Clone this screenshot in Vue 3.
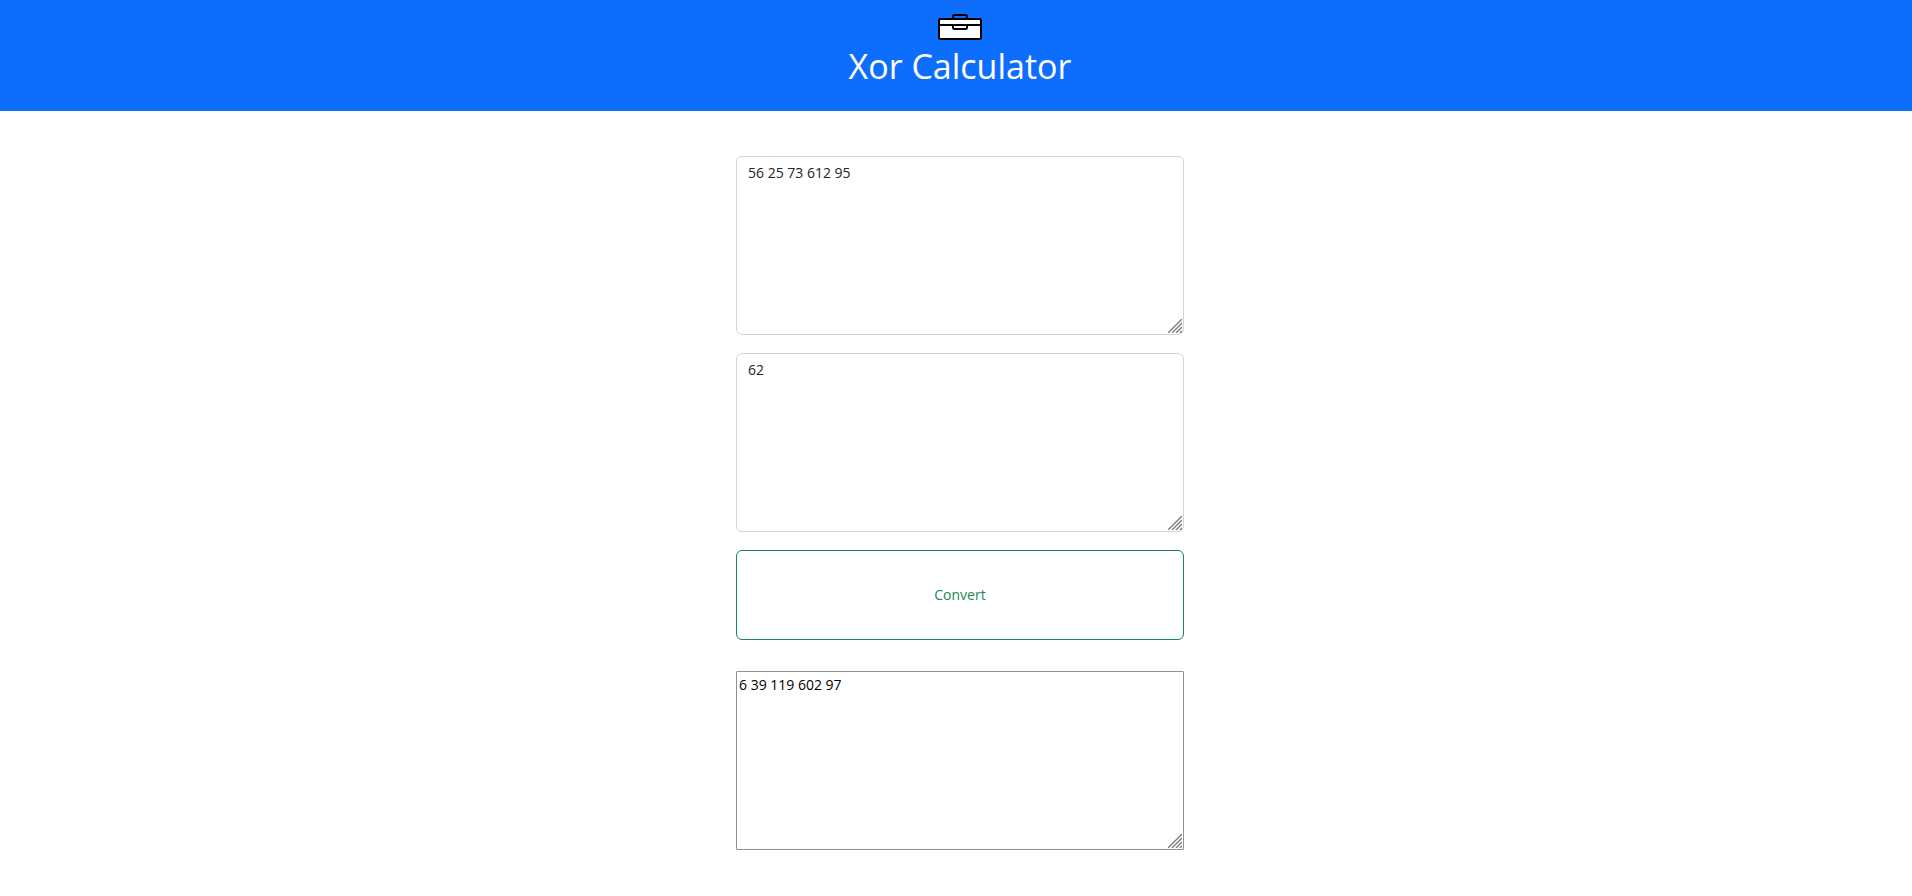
<script setup>
import { ref } from 'vue'

const numbers = ref('56 25 73 612 95')
const key = ref('62')
const result = ref('6 39 119 602 97')

function convert() {
  const mask = Number(key.value)
  result.value = numbers.value
    .trim()
    .split(/\s+/)
    .map((n) => Number(n) ^ mask)
    .join(' ')
}
</script>

<template>
  <div class="page">
    <header class="banner">
      <svg class="logo" viewBox="0 0 44 26" aria-hidden="true">
        <rect x="1" y="5" width="42" height="20" rx="1.5" fill="#fff" stroke="#000" stroke-width="2" />
        <path d="M15 5V2.500q0-1.500 1.500-1.500h11q1.500 0 1.500 1.500V5M1 11h42M15 11v2.500q0 1.500 1.500 1.500h11q1.500 0 1.500-1.500V11" fill="none" stroke="#000" stroke-width="2" />
      </svg>
      <h1>Xor Calculator</h1>
    </header>
    <main class="form">
      <div class="field">
        <textarea v-model="numbers" class="box" aria-label="Numbers" spellcheck="false"></textarea>
        <svg class="grip" viewBox="0 0 14 14" aria-hidden="true"><path d="M0 14L14 0M4 14L14 4M8 14L14 8M12 14L14 12" /></svg>
      </div>
      <div class="field">
        <textarea v-model="key" class="box" aria-label="Key" spellcheck="false"></textarea>
        <svg class="grip" viewBox="0 0 14 14" aria-hidden="true"><path d="M0 14L14 0M4 14L14 4M8 14L14 8M12 14L14 12" /></svg>
      </div>
      <button type="button" class="convert" @click="convert">Convert</button>
      <div class="field result">
        <textarea v-model="result" class="box plain" aria-label="Result" spellcheck="false"></textarea>
        <svg class="grip" viewBox="0 0 14 14" aria-hidden="true"><path d="M0 14L14 0M4 14L14 4M8 14L14 8M12 14L14 12" /></svg>
      </div>
    </main>
  </div>
</template>

<style>
body {
  margin: 0;
  background: #fff;
}
</style>

<style scoped>
.page,
.page * {
  box-sizing: border-box;
}
.page {
  font-family: "Open Sans", "Noto Sans", sans-serif;
  font-size: 14px;
  line-height: 20px;
}
.banner {
  display: flex;
  flex-direction: column;
  align-items: center;
  padding: 14px 0 23px 8px;
  background: #0d6efd;
  color: #fff;
}
.logo {
  width: 44px;
  height: 26px;
}
h1 {
  margin: 4px 0 0;
  font-size: 34px;
  font-weight: 400;
  line-height: 44px;
}
.form {
  display: flex;
  flex-direction: column;
  align-items: center;
  gap: 18px;
  padding: 45px 0 45px 8px;
}
.field {
  position: relative;
  display: flex;
}
.box {
  width: 448px;
  max-width: 100%;
  height: 20vh;
  margin: 0;
  padding: 6px 11px;
  border: 1px solid #ced4da;
  border-radius: 6px;
  background: #fff;
  color: #212529;
  font: inherit;
  resize: both;
}
.box::-webkit-resizer {
  background: transparent;
}
.box.plain {
  padding: 3px 2px;
  border-color: #8f8f9d;
  border-radius: 1px;
  color: #000;
}
.grip {
  position: absolute;
  right: 2px;
  bottom: 2px;
  width: 14px;
  height: 14px;
  pointer-events: none;
}
.grip path {
  fill: none;
  stroke: #777;
  stroke-width: 1.3;
}
.convert {
  width: 448px;
  max-width: 100%;
  height: 10vh;
  padding: 6px 12px;
  border: 1px solid #198754;
  border-radius: 6px;
  background: transparent;
  color: #198754;
  font: inherit;
  cursor: pointer;
}
.result {
  margin-top: 13px;
}
</style>
